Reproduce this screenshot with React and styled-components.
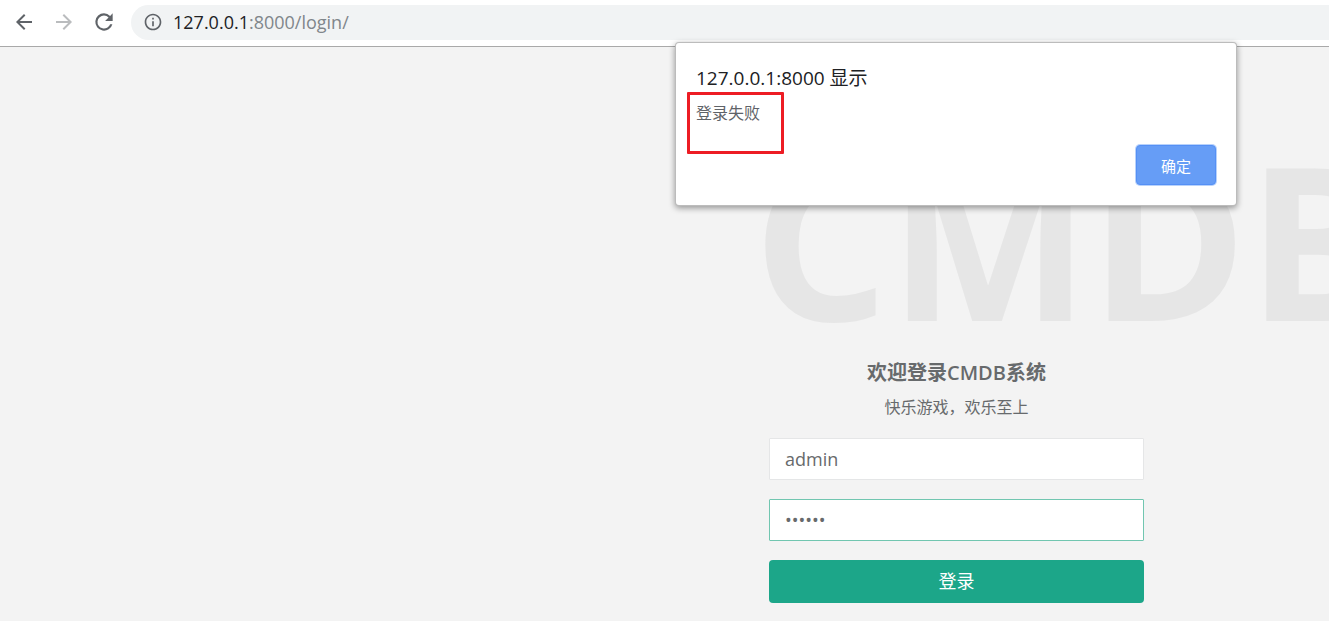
import React from 'react';
import styled, { createGlobalStyle } from 'styled-components';

const GlobalStyle = createGlobalStyle`
  *, *::before, *::after { box-sizing: border-box; }
  body {
    margin: 0;
    background: #f3f3f4;
    color: #676a6c;
    font-family: "Open Sans", "Noto Sans CJK SC", sans-serif;
    font-size: 16px;
  }
`;

const Shell = styled.div`
  display: flex;
  flex-direction: column;
  min-height: 100vh;
  position: relative;
  overflow: hidden;
  background: #f3f3f3;
`;

const Toolbar = styled.header`
  display: flex;
  align-items: center;
  gap: 16px;
  height: 47px;
  padding: 0 0 2px 12px;
  background: #fff;
  border-bottom: 1px solid #a9a9a9;
`;

const NavButton = styled.button`
  display: flex;
  align-items: center;
  justify-content: center;
  width: 24px;
  height: 24px;
  padding: 0;
  border: 0;
  background: none;
  color: ${(p) => (p.disabled ? '#babcbe' : '#5f6368')};
`;

const AddressBar = styled.div`
  display: flex;
  flex: 1;
  align-items: center;
  gap: 10px;
  height: 35px;
  margin-left: -1px;
  padding-left: 12px;
  border-radius: 18px 0 0 18px;
  background: #f1f3f4;
  color: #5f6368;
`;

const Address = styled.span`
  color: #80868b;
  font-size: 18px;
  line-height: 24px;
`;

const Host = styled.span`
  color: #202124;
`;

const Main = styled.main`
  display: grid;
  grid-template-columns: 1fr 375px 185px;
`;

const LoginPanel = styled.section`
  grid-column: 2;
  display: flex;
  flex-direction: column;
  padding-top: 85px;
`;

const Wordmark = styled.div`
  margin-left: -16px;
  color: #e6e6e6;
  font-size: 213px;
  font-weight: 700;
  line-height: 213px;
  white-space: nowrap;
`;

const Title = styled.h1`
  margin: 15px 0 8px;
  font-size: 20px;
  font-weight: 600;
  line-height: 26px;
  text-align: center;
`;

const Strong = styled.span`
  font-weight: 700;
`;

const Subtitle = styled.p`
  margin: 0 0 17px;
  font-size: 16px;
  line-height: 27px;
  text-align: center;
`;

const Form = styled.form`
  display: flex;
  flex-direction: column;
  gap: 19px;
`;

const Field = styled.input`
  width: 100%;
  height: 42px;
  padding: 0 15px;
  border: 1px solid ${(p) => (p.$active ? '#71c6b0' : '#e5e6e7')};
  border-radius: 1px;
  outline: none;
  background: #fff;
  color: #676a6c;
  font-family: inherit;
  font-size: 18px;
`;

const SubmitButton = styled.button`
  height: 43px;
  padding: 0 0 3px;
  border: 0;
  border-radius: 4px;
  background: #1ca689;
  color: #fff;
  font-family: inherit;
  font-size: 18px;
`;

const Dialog = styled.div`
  position: absolute;
  top: 43px;
  right: 93px;
  display: flex;
  flex-direction: column;
  width: 560px;
  padding: 22px 20px 20px;
  border-radius: 3px;
  background: #fff;
  box-shadow: 0 0 0 1px #bcbcbc, 0 2px 6px 1px rgba(0, 0, 0, 0.4);
`;

const DialogTitle = styled.h2`
  margin: 0;
  color: #202124;
  font-size: 19px;
  font-weight: 400;
  line-height: 26px;
`;

const DialogMessage = styled.p`
  position: relative;
  align-self: flex-start;
  margin: 10px 0 20px;
  color: #5f6368;
  font-size: 16px;
  line-height: 24px;
`;

const Highlight = styled.span`
  position: absolute;
  top: -9px;
  left: -9px;
  width: 97px;
  height: 62px;
  border: 3px solid #ed1c24;
  border-radius: 1px;
`;

const ConfirmButton = styled.button`
  align-self: flex-end;
  width: 80px;
  height: 40px;
  padding: 0;
  border: 1px solid #5590f5;
  border-radius: 4px;
  background: #669df6;
  box-shadow: 0 0 0 1px #b8d2fb;
  color: #fff;
  font-family: inherit;
  font-size: 15px;
`;

function Glyph({ d, size = 24 }) {
  return (
    <svg width={size} height={size} viewBox="0 0 24 24" fill="currentColor" aria-hidden="true">
      <path d={d} />
    </svg>
  );
}

const ReloadIcon = styled.svg`
  flex: none;
`;

const BACK = 'M20 11H7.83l5.59-5.59L12 4l-8 8 8 8 1.41-1.41L7.83 13H20v-2z';
const FORWARD = 'M12 4l-1.41 1.41L16.17 11H4v2h12.17l-5.58 5.59L12 20l8-8z';
const RELOAD =
  'M17.65 6.35A7.96 7.96 0 0 0 12 4a8 8 0 1 0 7.73 10h-2.08A6 6 0 1 1 12 6c1.66 0 3.14.69 4.22 1.78L13 11h7V4l-2.35 2.35z';
const INFO =
  'M11 17h2v-6h-2v6zm1-15C6.48 2 2 6.48 2 12s4.48 10 10 10 10-4.48 10-10S17.52 2 12 2zm0 18c-4.41 0-8-3.59-8-8s3.59-8 8-8 8 3.59 8 8-3.59 8-8 8zM11 9h2V7h-2v2z';

export default function App() {
  return (
    <Shell>
      <GlobalStyle />
      <Toolbar>
        <NavButton type="button" aria-label="后退"><Glyph d={BACK} /></NavButton>
        <NavButton type="button" aria-label="前进" disabled><Glyph d={FORWARD} /></NavButton>
        <NavButton type="button" aria-label="重新加载">
          <ReloadIcon width="26" height="26" viewBox="0 0 24 24" fill="currentColor" aria-hidden="true">
            <path d={RELOAD} />
          </ReloadIcon>
        </NavButton>
        <AddressBar>
          <Glyph d={INFO} size={20} />
          <Address><Host>127.0.0.1</Host>:8000/login/</Address>
        </AddressBar>
      </Toolbar>
      <Main>
        <LoginPanel>
          <Wordmark>CMDB</Wordmark>
          <Title><Strong>欢迎登录</Strong>CMDB<Strong>系统</Strong></Title>
          <Subtitle>快乐游戏，欢乐至上</Subtitle>
          <Form onSubmit={(e) => e.preventDefault()}>
            <Field type="text" aria-label="用户名" defaultValue="admin" />
            <Field type="password" aria-label="密码" defaultValue="123456" $active />
            <SubmitButton type="submit">登录</SubmitButton>
          </Form>
        </LoginPanel>
      </Main>
      <Dialog role="alertdialog" aria-labelledby="dialog-title">
        <DialogTitle id="dialog-title">127.0.0.1:8000 显示</DialogTitle>
        <DialogMessage>登录失败<Highlight /></DialogMessage>
        <ConfirmButton type="button">确定</ConfirmButton>
      </Dialog>
    </Shell>
  );
}
